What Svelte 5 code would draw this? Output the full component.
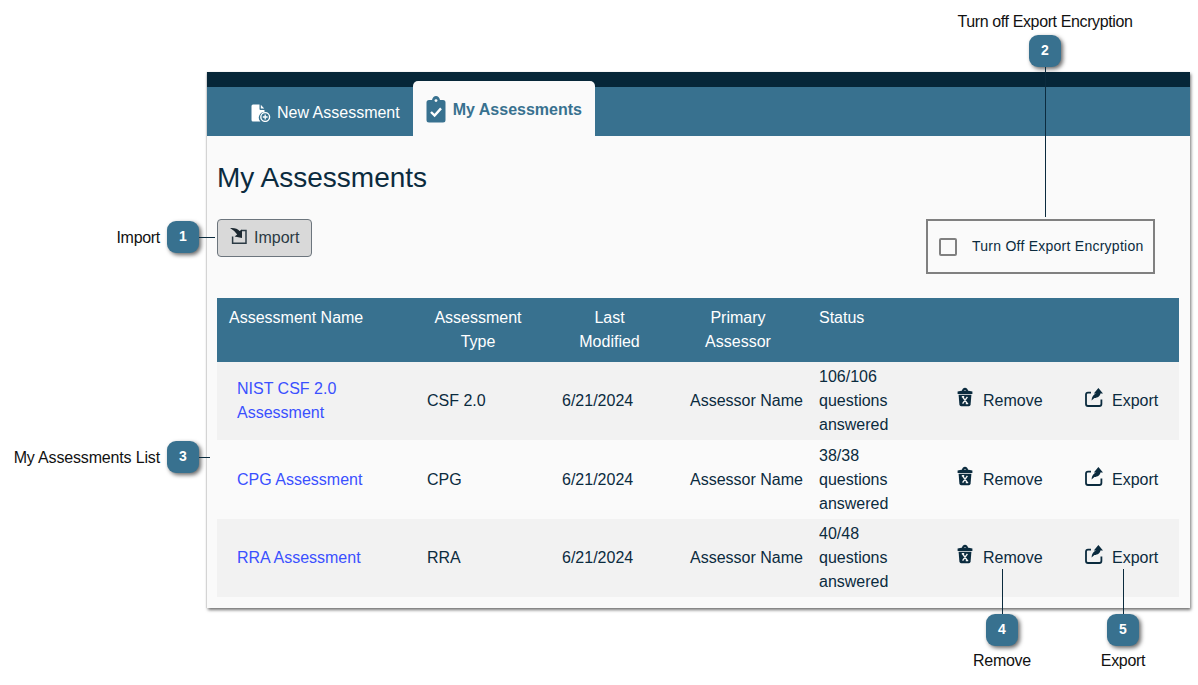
<script>
  const rows = [
    { name: ['NIST CSF 2.0', 'Assessment'], type: 'CSF 2.0', status: '106/106' },
    { name: ['CPG Assessment'], type: 'CPG', status: '38/38' },
    { name: ['RRA Assessment'], type: 'RRA', status: '40/48' }
  ];
</script>

{#snippet trash()}
  <svg class="ico" width="16" height="20" viewBox="0 0 16 20" aria-hidden="true">
    <path d="M4.8 4.5 C5 -0.6 11 -0.6 11.2 4.5 H9.4 C9.2 2.4 6.8 2.4 6.6 4.5 Z" fill="#0b2b3e" />
    <path d="M0.6 4.6 Q8 2.6 15.4 4.6 V7 H0.6 Z" fill="#0b2b3e" />
    <path d="M1.6 7.8 H14.4 L13.6 17.6 Q13.4 19.2 11.8 19.2 H4.2 Q2.6 19.2 2.4 17.6 Z" fill="#0b2b3e" />
    <path d="M5.6 9.8 L10.4 16.6 M10.4 9.8 L5.6 16.6 M4.8 9.8 H7.2 M8.8 16.6 H11.2" stroke="#f4f4f4" stroke-width="1.4" fill="none" />
  </svg>
{/snippet}

{#snippet share()}
  <svg class="ico share" width="18" height="20" viewBox="0 0 18 20" aria-hidden="true">
    <path d="M6 4.6 H3 Q1 4.6 1 6.6 V16 Q1 18 3 18 H14.4 Q16.4 18 16.4 16 V11.5" fill="none" stroke="#0b2b3e" stroke-width="1.8" />
    <path d="M13.4 0 L18 5.4 H15.4 C15.2 8.2 12.6 9.6 9.4 10 L6.6 12.6 C6.8 8.2 8.8 6 11.4 5.4 H8.8 Z" fill="#0b2b3e" />
  </svg>
{/snippet}

<div class="page">
  <section class="panel">
    <div class="topbar"></div>
    <nav class="tabs">
      <div class="tab">
        <svg width="20" height="18" viewBox="0 0 20 18" aria-hidden="true">
          <path d="M2 0.5 H8.5 V5 Q8.5 6 9.5 6 H13.5 V8 A5.6 5.6 0 0 0 9.4 17.5 H2 Q0.5 17.5 0.5 16 V2 Q0.5 0.5 2 0.5 Z" fill="#fff" />
          <path d="M9.8 0.8 L13.2 4.6 H9.8 Z" fill="#fff" />
          <circle cx="14.2" cy="13" r="4.4" fill="none" stroke="#fff" stroke-width="1.4" />
          <path d="M14.2 10.6 V15.4 M11.8 13 H16.6" stroke="#fff" stroke-width="1.3" />
        </svg>
        <span>New Assessment</span>
      </div>
      <div class="tab active">
        <svg width="20" height="27" viewBox="0 0 20 27" aria-hidden="true">
          <path d="M3 4 H6 Q7 0 10 0 Q13 0 14 4 H17 Q19.5 4 19.5 6.5 V24 Q19.5 26.5 17 26.5 H3 Q0.5 26.5 0.5 24 V6.5 Q0.5 4 3 4 Z" fill="#38718f" />
          <circle cx="10" cy="4.6" r="1.4" fill="#fafafa" />
          <path d="M5 16 L8.6 19.6 L15 12.4" fill="none" stroke="#fff" stroke-width="2.4" />
        </svg>
        <span>My Assessments</span>
      </div>
    </nav>

    <div class="content">
      <h1>My Assessments</h1>
      <div class="actions">
        <button class="import" type="button">
          <svg width="17" height="17" viewBox="0 0 17 17" aria-hidden="true">
            <path d="M11.5 2.6 H16 V15.2 H2.6 V8.6" fill="none" stroke="#2b3a44" stroke-width="1.5" />
            <path d="M0 0 Q7 -0.5 9.5 3 L12 1.4 V10 L4.6 8.4 L7.2 6.4 Q5 3 0 0 Z" fill="#1c2830" />
          </svg>
          <span>Import</span>
        </button>
        <label class="encrypt">
          <span class="check"></span>
          <span class="encrypt-text">Turn Off Export Encryption</span>
        </label>
      </div>

      <table>
        <colgroup>
          <col class="c1" /><col class="c2" /><col class="c3" /><col class="c4" /><col class="c5" /><col class="c6" /><col class="c7" />
        </colgroup>
        <thead>
          <tr>
            <th class="left">Assessment Name</th>
            <th>Assessment<br />Type</th>
            <th>Last<br />Modified</th>
            <th>Primary<br />Assessor</th>
            <th class="left">Status</th>
            <th></th>
            <th></th>
          </tr>
        </thead>
        <tbody>
          {#each rows as row}
            <tr>
              <td class="name">
                <a href="#top">{#each row.name as part, i}{#if i > 0}<br />{/if}{part}{/each}</a>
              </td>
              <td>{row.type}</td>
              <td>6/21/2024</td>
              <td class="nowrap">Assessor Name</td>
              <td>{row.status}<br />questions<br />answered</td>
              <td><span class="action">{@render trash()}<span>Remove</span></span></td>
              <td><span class="action export">{@render share()}<span>Export</span></span></td>
            </tr>
          {/each}
        </tbody>
      </table>
    </div>
  </section>

  <div class="callout c-1"><span class="text">Import</span><span class="badge">1</span><span class="line"></span></div>
  <div class="callout c-2"><span class="text">Turn off Export Encryption</span><span class="badge">2</span><span class="line"></span></div>
  <div class="callout c-3"><span class="text">My Assessments List</span><span class="badge">3</span><span class="line"></span></div>
  <div class="callout c-4"><span class="line"></span><span class="badge">4</span><span class="text">Remove</span></div>
  <div class="callout c-5"><span class="line"></span><span class="badge">5</span><span class="text">Export</span></div>
</div>

<style>
  :global(body) {
    margin: 0;
    background: #fff;
    font-family: "Liberation Sans", Arial, sans-serif;
    font-size: 16px;
    color: #0b2b3e;
  }
  .page {
    position: relative;
    width: 1198px;
    height: 685px;
    overflow: hidden;
    padding: 72px 8px 0 207px;
    box-sizing: border-box;
  }
  .panel {
    height: 536px;
    background: #fafafa;
    box-shadow: 1px 2px 3px rgba(0, 0, 0, 0.55), -1px 0 1px rgba(0, 0, 0, 0.08);
  }
  .topbar {
    height: 15px;
    background: #062638;
  }
  .tabs {
    display: flex;
    height: 49px;
    background: #38718f;
    padding-left: 44px;
  }
  .tab {
    display: flex;
    align-items: center;
    gap: 6px;
    color: #fff;
    padding-top: 3px;
    padding-right: 13px;
    line-height: 24px;
  }
  .tab.active {
    margin-top: -6px;
    height: 55px;
    box-sizing: border-box;
    background: #fafafa;
    color: #38718f;
    font-weight: 700;
    border-radius: 5px 5px 0 0;
    padding: 0 13px;
    gap: 7px;
  }
  .tab.active svg {
    margin-top: 2px;
  }
  .tab.active span {
    margin-top: 2px;
  }
  .content {
    padding: 0 11px 0 10px;
  }
  h1 {
    margin: 0;
    padding-top: 25px;
    font-size: 28px;
    line-height: 34px;
    font-weight: 400;
  }
  .actions {
    display: flex;
    justify-content: space-between;
    align-items: flex-start;
    margin-top: 24px;
    padding-right: 24px;
  }
  .import {
    display: flex;
    align-items: center;
    gap: 6px;
    width: 95px;
    height: 38px;
    padding: 0 0 0 12px;
    box-sizing: border-box;
    background: #d9d9d9;
    border: 1px solid #6c757d;
    border-radius: 4px;
    font: inherit;
    color: #2b3a44;
  }
  .import svg {
    margin-top: -3px;
    margin-right: 1px;
    overflow: visible;
  }
  .encrypt {
    display: flex;
    align-items: center;
    gap: 15px;
    width: 229px;
    height: 55px;
    box-sizing: border-box;
    padding-left: 11px;
    border: 2px solid #808080;
    font-size: 14px;
    letter-spacing: 0.25px;
    color: #0b2b3e;
  }
  .encrypt-text {
    margin-top: -2px;
  }
  .check {
    width: 18px;
    height: 18px;
    box-sizing: border-box;
    border: 2px solid #808080;
    border-radius: 2px;
  }
  table {
    width: 962px;
    margin-top: 24px;
    table-layout: fixed;
    border-collapse: collapse;
    line-height: 24px;
  }
  .c1 { width: 198px; }
  .c2 { width: 135px; }
  .c3 { width: 128px; }
  .c4 { width: 129px; }
  .c5 { width: 130px; }
  .c6 { width: 128px; }
  .c7 { width: 114px; }
  thead tr {
    background: #38718f;
    height: 64px;
  }
  th {
    font-weight: 400;
    color: #fff;
    text-align: center;
    vertical-align: top;
    padding: 8px 21px 8px 12px;
  }
  th.left {
    text-align: left;
  }
  tbody tr {
    height: 78px;
  }
  tbody tr:nth-child(2) {
    height: 79px;
  }
  tbody tr:nth-child(odd) {
    background: #f2f2f2;
  }
  td {
    padding: 2px 0 2px 12px;
    vertical-align: middle;
  }
  td.name {
    padding-left: 20px;
  }
  td.nowrap {
    white-space: nowrap;
  }
  a {
    color: #3a50ff;
    text-decoration: none;
  }
  .action {
    display: flex;
    align-items: center;
    gap: 10px;
    margin-left: 8px;
  }
  .action.export {
    margin-left: 8px;
    gap: 9px;
  }
  .ico {
    flex: none;
    margin-top: -8px;
  }
  .ico.share {
    margin-top: -6px;
  }
  .callout {
    position: absolute;
    display: flex;
    align-items: center;
    color: #111;
  }
  .badge {
    flex: none;
    width: 32px;
    height: 32px;
    border-radius: 9px;
    background: #38718f;
    color: #fff;
    font-size: 14px;
    font-weight: 700;
    line-height: 31px;
    text-align: center;
    box-shadow: 2px 2px 4px rgba(0, 0, 0, 0.6);
  }
  .line {
    flex: none;
    background: #0b2b3e;
  }
  .text {
    white-space: nowrap;
    line-height: 18px;
    letter-spacing: -0.3px;
  }
  .c-1, .c-3 {
    flex-direction: row;
  }
  .c-1 { top: 221px; left: 0; width: 215px; justify-content: flex-end; }
  .c-3 { top: 441px; left: 0; width: 210px; justify-content: flex-end; }
  .c-1 .text, .c-3 .text { margin-right: 7px; padding-top: 2px; }
  .c-3 .text { letter-spacing: -0.16px; }
  .c-1 .line { width: 16px; height: 1px; }
  .c-3 .line { width: 11px; height: 1px; }
  .c-2 {
    top: 13px;
    left: 945px;
    width: 200px;
    flex-direction: column;
  }
  .c-2 .text { margin-bottom: 4px; letter-spacing: -0.38px; }
  .c-2 .line { width: 1px; height: 150px; }
  .c-4, .c-5 {
    top: 569px;
    width: 100px;
    flex-direction: column;
  }
  .c-4 { left: 952px; }
  .c-5 { left: 1073px; }
  .c-4 .line, .c-5 .line { width: 1px; height: 45px; }
  .c-4 .text, .c-5 .text { margin-top: 6px; }
</style>
